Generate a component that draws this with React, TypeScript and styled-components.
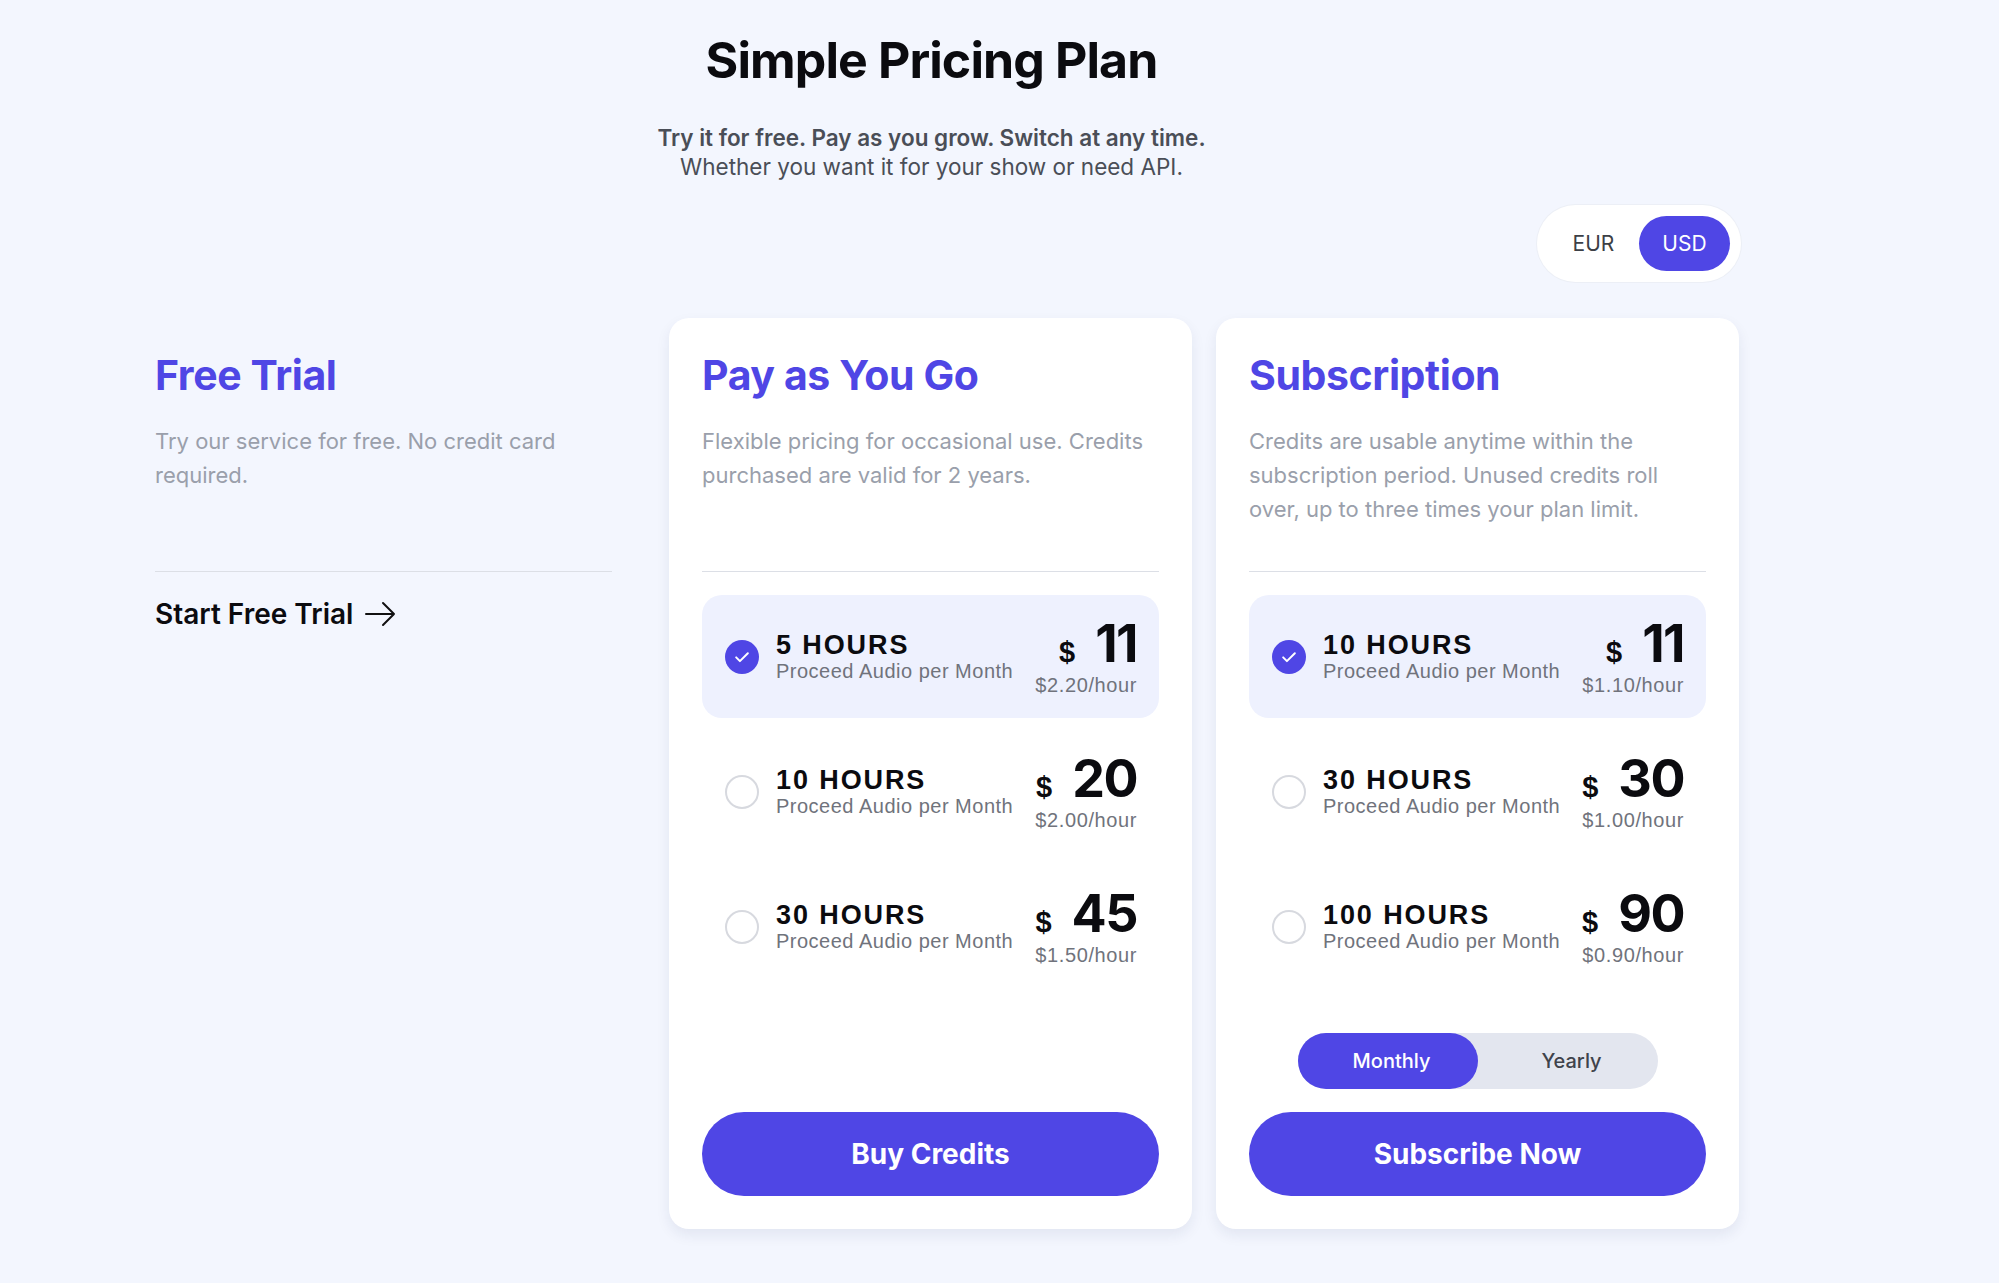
import React, { useState } from "react";
import styled, { createGlobalStyle } from "styled-components";

const GlobalStyle = createGlobalStyle`
  body {
    margin: 0;
    background: #f3f6fe;
    font-family: Inter, "Noto Sans", sans-serif;
    color: #0b0b0f;
  }
  * { box-sizing: border-box; }
`;

type Option = { hours: string; price: string; rate: string };

const payGo: Option[] = [
  { hours: "5 HOURS", price: "11", rate: "$2.20/hour" },
  { hours: "10 HOURS", price: "20", rate: "$2.00/hour" },
  { hours: "30 HOURS", price: "45", rate: "$1.50/hour" },
];

const subs: Option[] = [
  { hours: "10 HOURS", price: "11", rate: "$1.10/hour" },
  { hours: "30 HOURS", price: "30", rate: "$1.00/hour" },
  { hours: "100 HOURS", price: "90", rate: "$0.90/hour" },
];

const OptionList = ({ items }: { items: Option[] }) => {
  const [picked, setPicked] = useState(0);
  return (
    <Options>
      {items.map((o, i) => (
        <OptionRow key={o.hours} $active={i === picked} onClick={() => setPicked(i)}>
          <Radio $active={i === picked}>
            {i === picked && (
              <svg width="20" height="20" viewBox="0 0 24 24" fill="none" stroke="#fff" strokeWidth="2.4" strokeLinecap="round" strokeLinejoin="round">
                <path d="M5 12.5l4.5 4.5L19 7.5" />
              </svg>
            )}
          </Radio>
          <OptionText>
            <Hours>{o.hours}</Hours>
            <Sub>Proceed Audio per Month</Sub>
          </OptionText>
          <PriceBox>
            <PriceLine>
              <Dollar>$</Dollar>
              <Amount>{o.price}</Amount>
            </PriceLine>
            <Rate>{o.rate}</Rate>
          </PriceBox>
        </OptionRow>
      ))}
    </Options>
  );
};

export default function App() {
  const [currency, setCurrency] = useState("USD");
  const [period, setPeriod] = useState("Monthly");

  return (
    <Page>
      <GlobalStyle />
      <Header>
        <Title>Simple Pricing Plan</Title>
        <Lead>Try it for free. Pay as you grow. Switch at any time.</Lead>
        <SubLead>Whether you want it for your show or need API.</SubLead>
      </Header>

      <CurrencyRow>
        <Switch>
          {["EUR", "USD"].map((c) => (
            <SwitchBtn key={c} $on={currency === c} onClick={() => setCurrency(c)}>
              {c}
            </SwitchBtn>
          ))}
        </Switch>
      </CurrencyRow>

      <Grid>
        <Column>
          <PlanHead>
            <PlanTitle>Free Trial</PlanTitle>
            <PlanDesc>Try our service for free. No credit card required.</PlanDesc>
          </PlanHead>
          <Divider />
          <TrialLink>
            Start Free Trial
            <svg width="33" height="26" viewBox="0 0 33 26" fill="none" stroke="#111" strokeWidth="2" strokeLinecap="round" strokeLinejoin="round">
              <path d="M2 13h28M19 2l11 11-11 11" />
            </svg>
          </TrialLink>
        </Column>

        <Card>
          <PlanHead>
            <PlanTitle>Pay as You Go</PlanTitle>
            <PlanDesc>Flexible pricing for occasional use. Credits purchased are valid for 2 years.</PlanDesc>
          </PlanHead>
          <Divider />
          <OptionList items={payGo} />
          <CardFoot>
            <MainButton>Buy Credits</MainButton>
          </CardFoot>
        </Card>

        <Card>
          <PlanHead>
            <PlanTitle>Subscription</PlanTitle>
            <PlanDesc>
              Credits are usable anytime within the subscription period. Unused credits roll over, up to three times your plan limit.
            </PlanDesc>
          </PlanHead>
          <Divider />
          <OptionList items={subs} />
          <CardFoot>
            <Period>
              {["Monthly", "Yearly"].map((p) => (
                <PeriodBtn key={p} $on={period === p} onClick={() => setPeriod(p)}>
                  {p}
                </PeriodBtn>
              ))}
            </Period>
            <MainButton>Subscribe Now</MainButton>
          </CardFoot>
        </Card>
      </Grid>
    </Page>
  );
}

const Page = styled.div`
  width: 1619px;
  margin-left: 122px;
  padding: 30px 0 40px;
`;

const Header = styled.header`
  display: flex;
  flex-direction: column;
  align-items: center;
  text-align: center;
`;

const Title = styled.h1`
  margin: 0 0 33px;
  font-size: 50px;
  line-height: 60px;
  font-weight: 700;
  letter-spacing: -0.9px;
`;

const Lead = styled.p`
  margin: 0;
  font-size: 22.5px;
  line-height: 29px;
  font-weight: 600;
  color: #4a4e57;
`;

const SubLead = styled.p`
  margin: 0;
  font-size: 22.5px;
  line-height: 29px;
  font-weight: 400;
  color: #4a4e57;
`;

const CurrencyRow = styled.div`
  display: flex;
  justify-content: flex-end;
  margin-top: 24px;
`;

const Switch = styled.div`
  display: flex;
  padding: 11px;
  background: #fff;
  border-radius: 40px;
  box-shadow: 0 0 0 1px #eceff6;
`;

const SwitchBtn = styled.button<{ $on: boolean }>`
  width: 91px;
  height: 55px;
  border: none;
  border-radius: 28px;
  font-family: Inter, sans-serif;
  font-size: 21px;
  cursor: pointer;
  background: ${(p) => (p.$on ? "#4f46e5" : "transparent")};
  color: ${(p) => (p.$on ? "#fff" : "#3c3f46")};
`;

const Grid = styled.div`
  display: grid;
  grid-template-columns: repeat(3, 523px);
  gap: 24px;
  margin-top: 36px;
`;

const Column = styled.div`
  display: flex;
  flex-direction: column;
  padding: 33px;
`;

const Card = styled(Column)`
  background: #fff;
  border-radius: 20px;
  box-shadow: 0 6px 14px rgba(30, 40, 90, 0.08);
`;

const PlanHead = styled.div`
  height: 220px;
`;

const PlanTitle = styled.h2`
  margin: 0;
  font-size: 41px;
  line-height: 48px;
  font-weight: 700;
  letter-spacing: -0.4px;
  color: #4f46e5;
`;

const PlanDesc = styled.p`
  margin: 25px 0 0;
  font-size: 22px;
  line-height: 34px;
  color: #9a9fab;
`;

const Divider = styled.hr`
  margin: 0;
  border: none;
  border-top: 1px solid #dcdfe6;
`;

const TrialLink = styled.a`
  display: flex;
  align-items: center;
  gap: 11px;
  margin-top: 25px;
  font-size: 28px;
  font-weight: 600;
  color: #0b0b0f;
  cursor: pointer;
`;

const Options = styled.div`
  display: flex;
  flex-direction: column;
  gap: 12px;
  margin-top: 23px;
`;

const OptionRow = styled.div<{ $active: boolean }>`
  display: flex;
  align-items: center;
  height: 123px;
  padding: 0 22px 0 23px;
  border-radius: 20px;
  cursor: pointer;
  background: ${(p) => (p.$active ? "#eef1fe" : "transparent")};
`;

const Radio = styled.span<{ $active: boolean }>`
  display: flex;
  align-items: center;
  justify-content: center;
  flex: none;
  width: 34px;
  height: 34px;
  border-radius: 50%;
  background: ${(p) => (p.$active ? "#4f46e5" : "transparent")};
  border: ${(p) => (p.$active ? "none" : "2px solid #d7d9df")};
`;

const OptionText = styled.div`
  display: flex;
  flex-direction: column;
  margin-left: 17px;
  font-family: "Liberation Sans", Arial, sans-serif;
`;

const Hours = styled.span`
  font-size: 27px;
  line-height: 29px;
  font-weight: 700;
  letter-spacing: 1.9px;
  color: #0b0b0f;
`;

const Sub = styled.span`
  font-size: 20px;
  line-height: 22px;
  letter-spacing: 0.5px;
  color: #70737c;
`;

const PriceBox = styled.div`
  display: flex;
  flex-direction: column;
  align-items: flex-end;
  margin-left: auto;
  font-family: "Liberation Sans", Arial, sans-serif;
`;

const PriceLine = styled.div`
  display: flex;
  align-items: baseline;
  gap: 20px;
`;

const Dollar = styled.span`
  font-size: 29px;
  font-weight: 700;
`;

const Amount = styled.span`
  font-family: Inter, sans-serif;
  font-size: 52px;
  line-height: 54px;
  font-weight: 700;
  letter-spacing: -1.5px;
`;

const Rate = styled.span`
  margin-top: 3px;
  font-size: 20px;
  line-height: 22px;
  letter-spacing: 0.6px;
  color: #70737c;
`;

const CardFoot = styled.div`
  display: flex;
  flex-direction: column;
  align-items: center;
  gap: 23px;
  margin-top: auto;
  padding-top: 45px;
`;

const Period = styled.div`
  display: flex;
  width: 360px;
  height: 56px;
  border-radius: 28px;
  background: #e3e6ef;
`;

const PeriodBtn = styled.button<{ $on: boolean }>`
  flex: 1;
  padding: 0 0 0 8px;
  border: none;
  border-radius: 28px;
  font-family: Inter, sans-serif;
  font-size: 20px;
  font-weight: 500;
  cursor: pointer;
  background: ${(p) => (p.$on ? "#4f46e5" : "transparent")};
  color: ${(p) => (p.$on ? "#fff" : "#3f434b")};
`;

const MainButton = styled.button`
  width: 100%;
  height: 84px;
  border: none;
  border-radius: 42px;
  background: #4f46e5;
  color: #fff;
  font-family: Inter, sans-serif;
  font-size: 28px;
  font-weight: 700;
  cursor: pointer;
`;
